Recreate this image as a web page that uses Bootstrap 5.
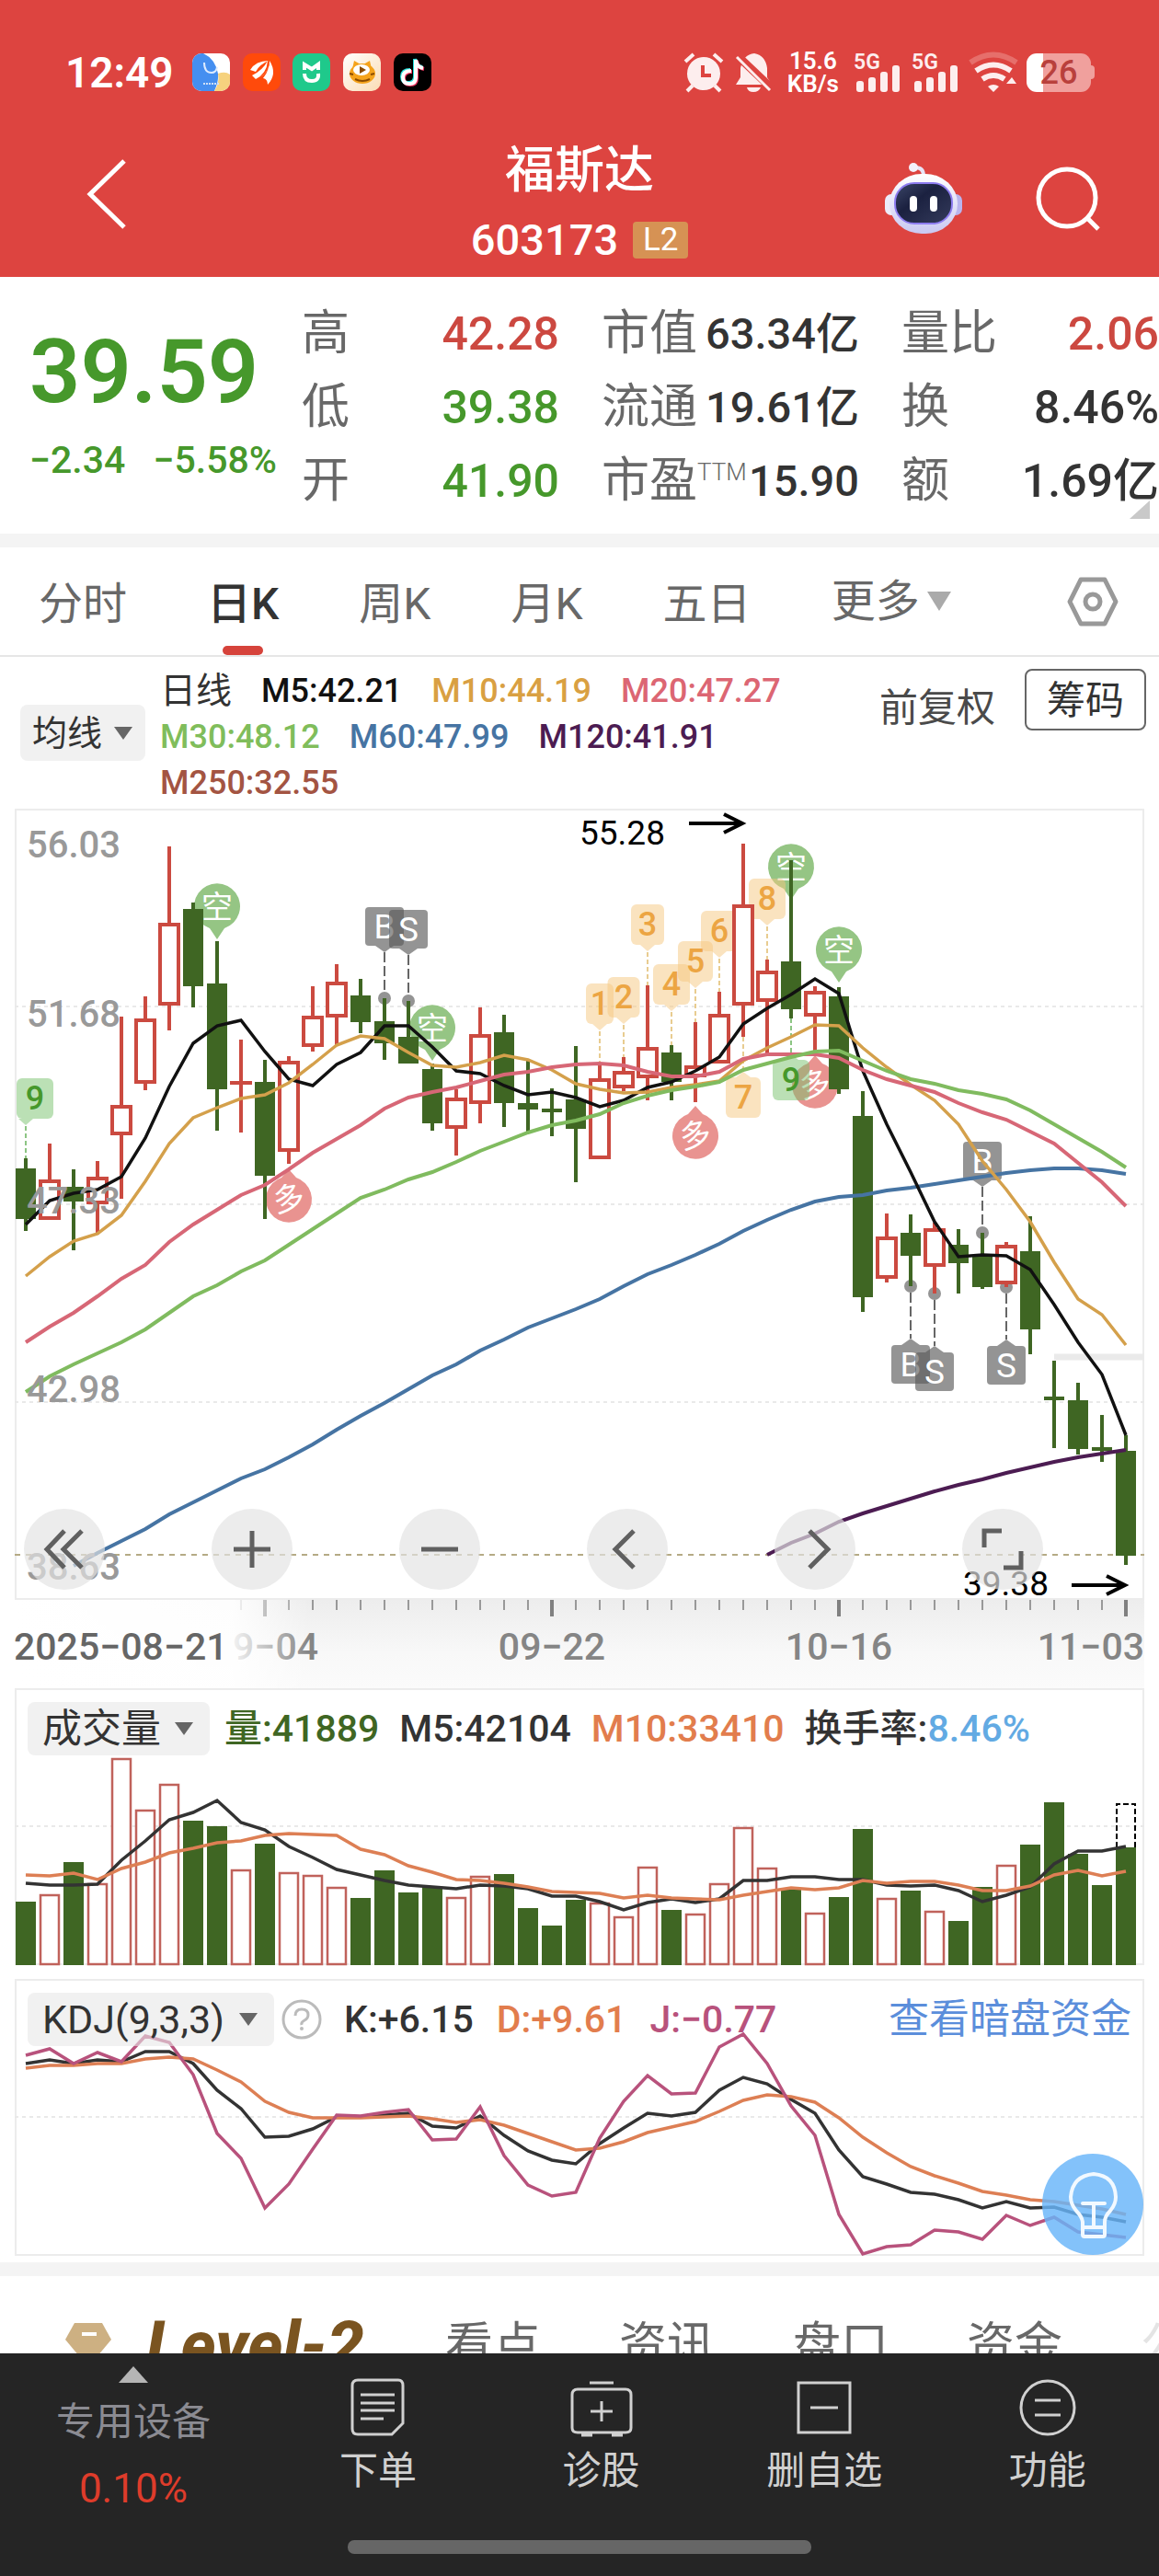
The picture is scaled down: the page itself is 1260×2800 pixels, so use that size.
<!DOCTYPE html>
<html lang="zh-CN">
<head>
<meta charset="utf-8">
<meta name="viewport" content="width=device-width, initial-scale=1">
<title>福斯达 603173</title>
<link rel="stylesheet" href="https://cdn.jsdelivr.net/npm/bootstrap@5.3.0/dist/css/bootstrap.min.css">
<style>
body{font-family:Roboto,"Noto Sans CJK SC",sans-serif;background:#fff;color:#333;font-size:42px;line-height:56px}
svg{display:block;overflow:visible}
a{text-decoration:none}
button{color:inherit;line-height:inherit}
.plain-btn{background:none;border:0;padding:0}
.c-red{color:#cc4840}.c-green{color:#46982b}
.top-zone{background:#dd4440;color:#fff}
.status-row{padding:56px 74px 0 71px;height:102px}
.clock{font-size:46px;line-height:46px;font-weight:600}
.speed{font-size:26px;line-height:25px;font-weight:600}
.speed span{display:block}
.battery{position:relative;width:70px;height:42px;background:linear-gradient(90deg,#fff 18px,#f0a09d 18px);border-radius:11px;color:#b9403c;font-size:36px;line-height:42px;font-weight:500}
.battery::after{content:"";position:absolute;left:70px;top:13px;width:4px;height:15px;border-radius:0 4px 4px 0;background:#f0a09d}
.title-bar{display:grid;grid-template-columns:minmax(0,1fr) auto minmax(0,1fr);padding:52px 64px 12px}
.back-side{padding:0 0 8px 30px}
.stock-name{font-size:54px;line-height:64px;font-weight:500;margin:0 0 15px}
.stock-code{font-size:47px;line-height:56px;font-weight:500}
.level-tag{background:#d69254;border-radius:4px;width:60px;height:40px;font-size:35px;line-height:40px;font-weight:400}
.title-tools{gap:80px;padding-bottom:12px}
.quote-zone{position:relative;height:279px}
.price-col{flex:0 0 328px;padding:63px 0 0 32px}
.price-big{font-size:97px;line-height:80px;font-weight:600;margin-bottom:28px}
.price-chg{font-size:41px;gap:30px;font-weight:500;white-space:nowrap}
.stat-grid{display:grid;grid-template-columns:repeat(3,1fr);column-gap:46px;padding-top:22px}
.stat-grid dl{margin:0}
.stat-line{display:flex;justify-content:space-between;line-height:80px;height:80px;white-space:nowrap}
.stat-line dt{font-weight:400;font-size:52px;color:#686868}
.stat-line dd{font-weight:500;font-size:50px;margin:0}
.mid-col dd{font-size:47px}
.ttm{font-size:26px;line-height:26px;vertical-align:18px;font-weight:300}
.fold-mark{position:absolute;right:10px;bottom:16px}
.band{height:15px;background:#f4f4f4}
.period-tabs{height:119px;padding:0 44px 0 42px;gap:87px;border-bottom:2px solid #e6e6e6;font-size:48px;color:#686868}
.period-tabs .tab-link{color:#686868;height:117px;line-height:124px;display:flex;flex-direction:column;align-items:center}
.period-tabs .tab-link.on{color:#333;font-weight:500}
.tab-link.on::after{content:"";flex:0 0 10px;width:44px;margin-top:-17px;border-radius:5px;background:#d6433b}
.ma-zone{height:165px;padding:12px 14px 3px 22px}
.pick{appearance:none;-webkit-appearance:none;border:0;border-radius:8px;color:#333;background:rgba(232,232,232,.6) url("data:image/svg+xml,%3Csvg xmlns='http://www.w3.org/2000/svg' width='20' height='14'%3E%3Cpath d='M0 0H20L10 14Z' fill='%23666'/%3E%3C/svg%3E") no-repeat right 18px center;height:58px;line-height:58px;padding:0 53px 0 16px;font-size:43px}
.pick-ma{font-size:38px;height:61px;padding:0 46px 0 13px;background-position:right 14px center;margin-top:40px}
.ma-list{flex:0 1 745px;gap:0 32px;font-size:36px;line-height:50px;font-weight:500;margin-left:16px}
.ma-list .kind{font-size:39px;font-weight:400}
.chip-btn{border:2px solid #666;border-radius:8px;width:132px;height:67px;padding:2px 0 0;font-size:42px;line-height:60px;color:#333;margin-top:1px}
.adjust{margin-top:16px;color:#4a4a4a}
.charts{padding:0 16px 6px}
.stack{display:grid}
.stack>*{grid-area:1/1;min-width:0}
.stack svg.plot{width:100%;height:auto}
.plot text{font-family:Roboto,"Noto Sans CJK SC",sans-serif}
.ctrl-row{align-self:end;gap:116px;padding:0 0 11px 10px}
.ctrl{width:88px;height:88px;border:0;border-radius:50%;background:rgba(227,227,227,.68);padding:0}
.ic{fill:none;stroke:#606060;stroke-width:5}
.sub-head{align-self:start;padding:14px 14px 0;height:74px;white-space:nowrap}
.vals{gap:22px;font-size:41px;font-weight:500}
.vals-k{gap:25px}
.gap-kdj{margin-top:14px}
.dark-link{color:#5b8edb;font-size:44px}
.bulb{align-self:end;justify-self:end;width:110px;height:110px;border:0;border-radius:50%;background:rgba(104,181,249,.82);padding:0;margin:0 1px 2px 0}
.info-tabs{height:84px;overflow:hidden;padding:68px 0 0 71px;white-space:nowrap}
.info-tabs a{color:#686868;font-size:52px;line-height:80px;margin-right:85px}
.info-tabs a.lv{color:#7a5420;font-size:72px;font-weight:800;font-style:italic;margin:0 88px 0 38px}
.info-tabs a.faint{color:#e4e4e4;margin:0}
.dock{background:#252525;color:#d0d0d0;height:242px;display:flex;flex-direction:column}
.dock-item{flex:1 1 0;padding-top:26px;color:#d0d0d0}
.dock-item svg{height:66px}
.dock-item span{line-height:72px}
.dock-first{flex:0 0 23%;color:#8b8b92;padding-top:14px}
.dock-first svg{height:18px}
.dock-first span{line-height:86px}
.dock-first .pct{color:#de3c2b;font-size:44px;line-height:58px}
.dk{fill:none;stroke:#d0d0d0;stroke-width:3}
.home-bar{width:504px;height:15px;border-radius:7px;background:#666;margin-bottom:24px}
</style>
</head>
<body>
<header class="top-zone">
  <div class="status-row d-flex align-items-center justify-content-between">
    <div class="d-flex align-items-center">
      <span class="clock me-3">12:49</span>
      <svg width="260" height="42" viewBox="0 0 260 42" class="ms-1">
        <defs><clipPath id="ap"><rect width="41" height="41" rx="10"/></clipPath>
        <linearGradient id="cream" x2="1" y2="1"><stop offset="0" stop-color="#fff"/><stop offset="1" stop-color="#fbdcb4"/></linearGradient></defs>
        <g clip-path="url(#ap)"><path fill="#fff" d="M0 0H41V41H0Z"/><path fill="#458ff0" d="M0 0H12Q25 6 28 22 29 30 24 41H0Z"/><path fill="#f6d27e" d="M28 22Q36 19 41 23V41H24Q30 32 28 22Z"/><path d="M13 10q0 11 8 11 5 0 6-6" fill="none" stroke="#dcebff" stroke-width="2"/><path d="M12 33H29" stroke="#cfe0f7" stroke-width="2" stroke-dasharray="2 1"/></g>
        <g transform="translate(55)"><rect width="41" height="41" rx="10" fill="#ff4a0b"/><path fill="#fff" d="M8 18Q14 8 28 8 18 12 14 20ZM10 24Q22 18 27 8 26 22 14 28ZM19 26Q30 18 29 8 38 22 27 34Q27 28 22 27 26 22 28 16 25 22 19 26Z"/></g>
        <g transform="translate(109)"><rect width="41" height="41" rx="10" fill="#1fc98b"/><path d="M13 18V12l8 5 7-5v6M13 22q0 8 8 8t7-8" fill="none" stroke="#fff" stroke-width="4"/></g>
        <g transform="translate(164)"><rect width="41" height="41" rx="10" fill="url(#cream)"/><ellipse cx="21" cy="22" rx="14" ry="11" fill="#f5a31c"/><path d="M10 17l2-9 7 4ZM31 17l-2-9-7 4Z" fill="#f5a31c"/><ellipse cx="20" cy="18" rx="9" ry="6" fill="#fff"/><path d="M18 14l7 4-7 4Z" fill="#8a4b00"/><path d="M13 28q8 4 16 0M7 22l4 1M34 22l-4 1" stroke="#8a4b00" stroke-width="2" fill="none"/></g>
        <g transform="translate(219)"><rect width="41" height="41" rx="10"/><g fill="none" stroke-width="4"><path d="M19 19q-9 0-9 7t7 7 7-7V7q1 8 8 9" stroke="#25e0dc" transform="translate(-1 -1)"/><path d="M19 19q-9 0-9 7t7 7 7-7V7q1 8 8 9" stroke="#f03561" transform="translate(1 1)"/><path d="M19 19q-9 0-9 7t7 7 7-7V7q1 8 8 9" stroke="#fff"/></g></g>
      </svg>
    </div>
    <div class="d-flex align-items-center">
      <svg width="96" height="42" viewBox="0 0 96 42" fill="#fdeeee">
        <circle cx="21" cy="22" r="18"/><g fill="none" stroke="#fdeeee" stroke-width="4"><path d="M1 9l9-8M41 9l-9-8M9 35l-6 6M33 35l6 6"/></g><path d="M20 13v11h9" fill="none" stroke="#dd4440" stroke-width="4"/>
        <path d="M56 34l5-8V16Q64 1 76 0 88 2 90 16v10l5 8Z"/><path d="M68 37h15q-2 5-8 5t-7-5Z"/><path d="M57 2l38 36" stroke="#dd4440" stroke-width="9"/><path d="M57 4l36 36" stroke="#fdeeee" stroke-width="3"/>
      </svg>
      <div class="speed text-center ms-3 me-3"><span>15.6</span><span>KB/s</span></div>
      <svg width="180" height="42" viewBox="0 0 180 42" fill="#fdeeee" font-family="Roboto, sans-serif" font-size="23" font-weight="600">
        <g><text x="0" y="17">5G</text><rect x="3" y="30" width="8" height="12" rx="3"/><rect x="16" y="26" width="8" height="16" rx="3"/><rect x="29" y="20" width="8" height="22" rx="3"/><rect x="42" y="13" width="8" height="29" rx="3"/></g>
        <g transform="translate(63)"><text x="0" y="17">5G</text><rect x="3" y="30" width="8" height="12" rx="3"/><rect x="16" y="26" width="8" height="16" rx="3"/><rect x="29" y="20" width="8" height="22" rx="3"/><rect x="42" y="13" width="8" height="29" rx="3"/></g>
        <g fill="none" stroke="#fdeeee" stroke-width="6"><path d="M127 10q25-17 50 0" stroke="#e66f6b"/><path d="M133 19q19-13 38 0"/><path d="M140 28q12-8 24 0"/></g><path d="M146 36q6-4 12 0l-6 6ZM166 33l6-7 5 7Z"/>
      </svg>
      <span class="battery text-center ms-2">26</span>
    </div>
  </div>
  <nav class="title-bar align-items-center">
    <div class="back-side"><button class="plain-btn" aria-label="返回"><svg width="44" height="76" viewBox="0 0 44 76"><path d="M41 2L4 38 41 74" fill="none" stroke="#fff" stroke-width="5"/></svg></button></div>
    <div class="text-center">
      <h1 class="stock-name">福斯达</h1>
      <div class="stock-code d-flex align-items-center justify-content-center gap-3">603173<span class="level-tag">L2</span></div>
    </div>
    <div class="title-tools d-flex justify-content-end align-items-center">
      <button class="plain-btn" aria-label="智能助手"><svg width="84" height="78" viewBox="0 0 84 78"><defs><linearGradient id="rb" y2="1" x2="0"><stop offset="0" stop-color="#fff"/><stop offset="1" stop-color="#c9c8f2"/></linearGradient><linearGradient id="vs" x2="1" y2="1"><stop offset="0" stop-color="#3c4769"/><stop offset=".4" stop-color="#1b2140"/><stop offset="1" stop-color="#343b5c"/></linearGradient></defs><path d="M42 14q0-9-9-9" fill="none" stroke="#e8e4f6" stroke-width="4"/><circle cx="31" cy="5" r="5" fill="#f3f0fb"/><rect y="34" width="14" height="23" rx="7" fill="#ececfa"/><rect x="70" y="34" width="14" height="23" rx="7" fill="#b9b5ee"/><rect x="5" y="12" width="74" height="65" rx="35" fill="url(#rb)"/><rect x="11" y="22" width="62" height="44" rx="21" fill="url(#vs)" stroke="#8d7cf0" stroke-width="2"/><path d="M31 40v9M53 40v9" stroke="#fff" stroke-width="8" stroke-linecap="round"/></svg></button>
      <button class="plain-btn" aria-label="搜索"><svg width="70" height="70" viewBox="0 0 70 70" fill="none" stroke="#fff" stroke-width="5"><circle cx="34" cy="34" r="31"/><path d="M56 56l12 12"/></svg></button>
    </div>
  </nav>
</header>

<main>
<section class="quote-zone d-flex">
  <div class="price-col c-green">
    <div class="price-big">39.59</div>
    <div class="price-chg d-flex"><span>−2.34</span><span>−5.58%</span></div>
  </div>
  <div class="stat-grid flex-fill">
    <dl><div class="stat-line"><dt>高</dt><dd class="c-red">42.28</dd></div><div class="stat-line"><dt>低</dt><dd class="c-green">39.38</dd></div><div class="stat-line"><dt>开</dt><dd class="c-green">41.90</dd></div></dl>
    <dl class="mid-col"><div class="stat-line"><dt>市值</dt><dd>63.34亿</dd></div><div class="stat-line"><dt>流通</dt><dd>19.61亿</dd></div><div class="stat-line"><dt>市盈<span class="ttm">TTM</span></dt><dd>15.90</dd></div></dl>
    <dl><div class="stat-line"><dt>量比</dt><dd class="c-red">2.06</dd></div><div class="stat-line"><dt>换</dt><dd>8.46%</dd></div><div class="stat-line"><dt>额</dt><dd>1.69亿</dd></div></dl>
  </div>
  <svg class="fold-mark" width="22" height="20" viewBox="0 0 22 20"><path d="M22 0V20H0Z" fill="#c9c9c9"/></svg>
</section>
<div class="band"></div>

<nav class="period-tabs d-flex align-items-center">
  <a class="tab-link" href="#">分时</a><a class="tab-link on" href="#">日K</a><a class="tab-link" href="#">周K</a><a class="tab-link" href="#">月K</a><a class="tab-link" href="#">五日</a>
  <button class="plain-btn d-flex align-items-center gap-2">更多<svg width="26" height="21" viewBox="0 0 26 21"><path d="M0 0H26L13 21Z" fill="#aaa"/></svg></button>
  <button class="plain-btn ms-auto" aria-label="设置"><svg width="56" height="56" viewBox="0 0 56 56" fill="none" stroke="#999" stroke-width="5" stroke-linejoin="round"><path d="M15 4H41L53 28 41 52H15L3 28Z"/><circle cx="28" cy="28" r="8"/></svg></button>
</nav>

<section class="ma-zone d-flex align-items-start">
  <select class="pick pick-ma" aria-label="主图指标"><option>均线</option></select>
  <div class="ma-list d-flex flex-wrap">
    <span class="kind">日线</span><span style="color:#111">M5:42.21</span><span style="color:#d9a042">M10:44.19</span><span style="color:#dc6673">M20:47.27</span><span style="color:#80bd5b">M30:48.12</span><span style="color:#4674a3">M60:47.99</span><span style="color:#4c1c52">M120:41.91</span><span style="color:#a35442">M250:32.55</span>
  </div>
  <span class="adjust ms-auto me-4">前复权</span>
  <button class="btn chip-btn ms-2">筹码</button>
</section>

<section class="charts">
  <div class="stack">
    <svg class="plot" id="kline" viewBox="16 879 1228 860" role="img" aria-label="日K线"></svg>
    <div class="ctrl-row d-flex">
      <button class="ctrl" aria-label="最早"><svg width="88" height="88" class="ic"><path d="M44 24L25 44l19 20M63 24L43 44l20 20"/></svg></button>
      <button class="ctrl" aria-label="放大"><svg width="88" height="88" class="ic"><path d="M24 44H64M44 24V64"/></svg></button>
      <button class="ctrl" aria-label="缩小"><svg width="88" height="88" class="ic"><path d="M24 44H64"/></svg></button>
      <button class="ctrl" aria-label="左移"><svg width="88" height="88" class="ic"><path d="M51 24L31 44l20 20"/></svg></button>
      <button class="ctrl" aria-label="右移"><svg width="88" height="88" class="ic"><path d="M38 24L58 44 38 64"/></svg></button>
      <button class="ctrl" aria-label="全屏"><svg width="88" height="88" class="ic"><path d="M24 42V24H43M64 46V64H45"/></svg></button>
    </div>
  </div>
  <div class="stack"><svg class="plot" id="axis" viewBox="16 1739 1228 96" role="img" aria-label="日期"></svg></div>
  <div class="stack">
    <svg class="plot" id="vol" viewBox="16 1835 1228 302" role="img" aria-label="成交量"></svg>
    <div class="sub-head d-flex align-items-center">
      <select class="pick" aria-label="副图一指标"><option>成交量</option></select>
      <div class="vals d-flex ms-3"><span style="color:#3f6623">量:41889</span><span>M5:42104</span><span style="color:#e27d4d">M10:33410</span><span>换手率:<span style="color:#62aae3">8.46%</span></span></div>
    </div>
  </div>
  <div class="stack gap-kdj">
    <svg class="plot" id="kdj" viewBox="16 2151 1228 302" role="img" aria-label="KDJ"></svg>
    <div class="sub-head d-flex align-items-center">
      <select class="pick" aria-label="副图二指标"><option>KDJ(9,3,3)</option></select>
      <button class="plain-btn ms-2" aria-label="帮助"><svg width="44" height="44" viewBox="0 0 44 44"><circle cx="22" cy="22" r="20" fill="none" stroke="#bbb" stroke-width="3"/><path d="M15 18q0-7 7-7t7 6q0 4-4 6t-3 5" fill="none" stroke="#bbb" stroke-width="3"/><circle cx="22" cy="32" r="2" fill="#bbb"/></svg></button>
      <div class="vals vals-k d-flex ms-4"><span>K:+6.15</span><span style="color:#e27d4d">D:+9.61</span><span style="color:#b8527c">J:−0.77</span></div>
      <a class="dark-link ms-auto" href="#">查看暗盘资金</a>
    </div>
    <button class="bulb" aria-label="提示"><svg width="110" height="110" viewBox="0 0 110 110" fill="none" stroke="#f2f9ff" stroke-width="4" stroke-linejoin="round" stroke-linecap="round"><path d="M44 88V74Q43 68 37 62 31 55 31 47 33 24 56 22 79 24 80 47 80 55 74 62 68 68 68 74V88Q68 90 66 90H46Q44 90 44 88ZM45 80H67M44 54H68M56 54V79"/></svg></button>
  </div>
</section>
<div class="band"></div>

<nav class="info-tabs d-flex align-items-center">
  <svg width="50" height="50" viewBox="0 0 50 50" class="flex-shrink-0"><path d="M10 0H40L50 18 25 48 0 18Z" fill="#cdb082"/><path d="M18 12H34" stroke="#fff" stroke-width="4"/></svg>
  <a class="lv" href="#">Level-2</a><a href="#">看点</a><a href="#">资讯</a><a href="#">盘口</a><a href="#">资金</a><a class="faint" href="#">公告</a>
</nav>
</main>

<footer class="dock">
  <div class="d-flex flex-fill">
    <button class="plain-btn dock-first d-flex flex-column align-items-center"><svg width="32" height="18" viewBox="0 0 32 18"><path d="M16 0L32 18H0Z" fill="#b5b5b5"/></svg><span>专用设备</span><span class="pct">0.10%</span></button>
    <a class="dock-item d-flex flex-column align-items-center" href="#"><svg width="60" height="66" class="dk"><path d="M8 3H52Q57 3 57 9V50L45 62H8Q2 62 2 56V9Q2 3 8 3ZM11 19H48M11 28H48M11 36H48M11 45H36"/></svg><span>下单</span></a>
    <a class="dock-item d-flex flex-column align-items-center" href="#"><svg width="70" height="66" class="dk"><path d="M9 13H61Q67 13 67 19V55Q67 60 61 60H9Q3 60 3 55V19Q3 13 9 13ZM22 6H48M35 26V48M23 37H47M13 63H25M46 63H58"/></svg><span>诊股</span></a>
    <a class="dock-item d-flex flex-column align-items-center" href="#"><svg width="60" height="66" class="dk"><path d="M2 6H58V60H2ZM15 33H45"/></svg><span>删自选</span></a>
    <a class="dock-item d-flex flex-column align-items-center" href="#"><svg width="62" height="66" class="dk"><circle cx="31" cy="33" r="29"/><path d="M17 25H45M17 41H45"/></svg><span>功能</span></a>
  </div>
  <div class="home-bar mx-auto"></div>
</footer>

<script>
const X = i => 28 + 26 * i, RED = '#cb4a40', GREEN = '#3f6623';
const poly = (a, c, w, s = 0) => `<polyline fill="none" stroke="${c}" stroke-width="${w}" points="${a.map((y, k) => X(k + s) + ',' + y).join(' ')}"/>`;
const grid = y => `<path d="M16 ${y}H1244" stroke="#e9e9e9" stroke-width="2" stroke-dasharray="4 4"/>`;
const txt = (x, y, s, size, fill, o = '') => `<text x="${x}" y="${y}" font-size="${size}" fill="${fill}" ${o}>${s}</text>`;

/* daily candles: colour, high, body top, body bottom, low */
const candles = [
['g',1259,1270,1325,1338],['r',1243,1282,1326,1326],['g',1271,1290,1306,1359],['r',1262,1279,1309,1342],['r',1105,1201,1234,1303],
['r',1083,1107,1178,1185],['r',920,1003,1093,1120],['g',981,988,1072,1095],['g',1023,1069,1184,1229],['r',1130,1175,1179,1231],
['g',1152,1176,1278,1325],['r',1148,1153,1252,1265],['r',1072,1104,1138,1143],['r',1048,1067,1106,1136],['g',1064,1082,1111,1123],
['g',1085,1110,1134,1152],['g',1088,1127,1156,1156],['g',1156,1162,1221,1229],['r',1184,1193,1227,1256],['r',1095,1124,1200,1221],
['g',1103,1122,1199,1225],['g',1153,1199,1206,1230],['g',1183,1205,1209,1235],['g',1137,1195,1227,1285],['r',1157,1172,1260,1260],
['r',1149,1164,1183,1186],['r',1071,1138,1172,1196],['g',1136,1144,1176,1196],['r',1111,1158,1171,1198],['r',1078,1102,1156,1156],
['r',917,983,1093,1127],['r',1043,1055,1089,1146],['g',935,1045,1097,1107],['r',1072,1077,1105,1146],['g',1073,1083,1184,1189],
['g',1186,1213,1410,1426],['r',1319,1344,1390,1394],['g',1320,1340,1365,1398],['r',1329,1335,1377,1406],['g',1336,1353,1373,1406],
['g',1340,1365,1399,1401],['r',1350,1353,1396,1399],['g',1322,1360,1445,1472],['g',1479,1518,1522,1574],['g',1503,1522,1575,1581],
['g',1538,1573,1577,1589],['g',1560,1577,1691,1701]];
const m5=[1331,1305,1297,1293,1279,1237,1181,1134,1115,1109,1143,1173,1180,1157,1144,1115,1115,1138,1164,1167,1180,1190,1187,1193,1203,1196,1182,1176,1164,1149,1113,1096,1081,1064,1080,1164,1222,1274,1328,1366,1364,1365,1380,1418,1459,1494,1560];
const m10=[1387,1366,1349,1341,1321,1284,1243,1215,1204,1194,1190,1177,1157,1136,1126,1129,1144,1158,1160,1155,1147,1152,1163,1178,1184,1188,1187,1182,1179,1175,1153,1139,1127,1114,1115,1139,1160,1179,1196,1222,1262,1293,1328,1372,1412,1429,1462];
const m20=[1459,1442,1427,1409,1390,1375,1350,1331,1315,1299,1288,1271,1253,1238,1223,1205,1193,1187,1182,1175,1168,1165,1160,1157,1156,1158,1165,1170,1170,1165,1151,1146,1146,1146,1150,1163,1173,1180,1187,1199,1209,1217,1230,1243,1264,1285,1311];
const m30=[1513,1496,1483,1471,1459,1445,1427,1409,1397,1382,1370,1353,1336,1319,1302,1293,1282,1274,1263,1251,1241,1231,1223,1218,1211,1199,1191,1185,1181,1176,1163,1156,1149,1143,1142,1153,1164,1173,1178,1185,1189,1195,1207,1222,1237,1252,1269];
const m60=[1702,1688,1675,1662,1646,1633,1620,1607,1597,1584,1570,1554,1539,1525,1510,1495,1483,1468,1456,1443,1433,1423,1412,1398,1385,1375,1364,1352,1338,1326,1315,1306,1301,1299,1294,1291,1287,1283,1279,1275,1272,1270,1270,1272,1276];
const m120=[1690,1677,1667,1654,1645,1637,1629,1621,1614,1608,1601,1595,1589,1584,1580,1576];

let k = '<rect x="17" y="880" width="1226" height="858" fill="#fff" stroke="#ececec" stroke-width="2"/>' + grid(1094) + grid(1309) + grid(1524);
k += '<path d="M16 1690H1244" stroke="#b5aa85" stroke-width="2" stroke-dasharray="6 6"/><path d="M1146 1475H1244" stroke="#eaeaea" stroke-width="7"/>';
/* round bearish / bullish pins */
for (const [i, t] of [[8,1021],[17,1153],[32,978],[34,1068]])
  k += `<path d="M${X(i)} ${t}l-8 -12a25 25 0 1 1 16 0Z" fill="#95c584"/>` + txt(X(i), t - 23, '空', 34, '#fff', 'text-anchor="middle"');
for (const [i, t] of [[11,1271],[28,1202],[33,1147]])
  k += `<path d="M${X(i)} ${t}l-8 9a25 25 0 1 0 16 0Z" fill="#e99390"/>` + txt(X(i), t + 44, '多', 34, '#fff', `text-anchor="middle" transform="rotate(-12 ${X(i)} ${t + 32})"`);
/* numbered sequence tags: index, digit, rect top, width, line end, green?, below?, shift */
for (const [i, s, y, w, e, g, b, dx = 0] of [[24,1,1069,30,1157],[25,2,1062,35,1149],[26,3,983,36,1071],[27,4,1048,40,1136],[28,5,1023,38,1111],[29,6,990,40,1078],[31,8,955,40,1043],[30,7,1171,38,1127,0,1],[32,9,1152,40,1107,1,1],[0,9,1172,40,1259,1,0,10]]) {
  const x = X(i), f = g ? 'rgba(119,193,107,.5)' : 'rgba(245,199,127,.5)', c = g ? '#46982b' : '#eca543';
  k += `<rect x="${x - w / 2 + dx}" y="${y}" width="${w}" height="44" rx="6" fill="${f}"/>`;
  k += b ? `<path d="M${x - 8} ${y}l8 -6 8 6Z" fill="${f}"/><path d="M${x} ${e}V${y - 8}"` : `<path d="M${x - 8} ${y + 44}l8 7 8 -7Z" fill="${f}"/><path d="M${x} ${y + 52}V${e}"`;
  k += ` stroke="${g ? '#8cc583' : '#e8cc90'}" stroke-width="2" stroke-dasharray="5 3"/>` + txt(x + dx, y + 34, s, 36, c, 'text-anchor="middle" font-weight="500"');
}
/* buy / sell marks: index, letter, tag top, dot y */
for (const [i, s, y, d] of [[15,'B',986,1085],[16,'S',989,1088],[40,'B',1241,1340],[37,'B',1462,1398],[38,'S',1470,1406],[41,'S',1463,1399]]) {
  const x = X(i), up = y < d, f = 'rgba(90,90,90,.65)';
  k += `<rect x="${x - 21}" y="${y}" width="42" height="42" rx="4" fill="${f}"/><path d="${up ? `M${x - 10} ${y + 42}l10 7 10 -7Z` : `M${x - 10} ${y}l10 -7 10 7Z`}" fill="${f}"/><circle cx="${x}" cy="${d}" r="7" fill="#949494"/><path d="M${x} ${up ? y + 49 : d + 7}V${up ? d - 7 : y - 7}" stroke="#666" stroke-width="2" stroke-dasharray="11 4"/>` + txt(x, y + 34, s, 37, '#fff', 'text-anchor="middle"');
}
candles.forEach(([c, h, t, b, l], i) => {
  const x = X(i);
  k += `<path d="M${x} ${h}V${l}" stroke="${c === 'r' ? RED : GREEN}" stroke-width="4"/>`;
  if (c === 'g') k += `<rect x="${x - 11}" y="${t}" width="22" height="${b - t}" fill="${GREEN}"/>`;
  else if (b - t < 6) k += `<rect x="${x - 12}" y="${t}" width="24" height="${b - t}" fill="${RED}"/>`;
  else k += `<rect x="${x - 10}" y="${t + 2}" width="20" height="${b - t - 4}" fill="#fff" stroke="${RED}" stroke-width="4"/>`;
});
k += poly(m60, '#4674a3', 4, 2) + poly(m120, '#4c1c52', 4, 31) + poly(m5, '#111', 3.5) + poly(m10, '#d4a04b', 3.5) + poly(m20, '#d76776', 4) + poly(m30, '#80bb5f', 4);
[['56.03',932],['51.68',1116],['47.33',1319],['42.98',1524],['38.63',1717]].forEach(([s, y]) => k += txt(29, y, s, 40, '#999', 'font-weight="500"'));
k += txt(630, 918, '55.28', 37, '#000') + txt(1047, 1734, '39.38', 37, '#000');
k += '<path d="M749 895H806M787 885L807 895 787 905M1165 1723H1222M1203 1713L1223 1723 1203 1733" fill="none" stroke="#000" stroke-width="4"/>';
document.getElementById('kline').innerHTML = k;

/* date axis */
let a = '<defs><linearGradient id="sh" x2="0" y2="1"><stop offset="0" stop-color="#ededed"/><stop offset=".6" stop-color="#f8f8f8"/><stop offset="1" stop-color="#fbfbfb"/></linearGradient><linearGradient id="fd"><stop offset="0" stop-color="#fff"/><stop offset=".74" stop-color="#fff" stop-opacity=".9"/><stop offset="1" stop-color="#fff" stop-opacity="0"/></linearGradient></defs><rect x="16" y="1739" width="1228" height="96" fill="url(#sh)"/>';
for (let i = 9; i < 47; i++) a += (i - 10) % 12 ? `<path d="M${X(i)} 1739V1750" stroke="#999" stroke-width="2"/>` : `<path d="M${X(i)} 1739V1757" stroke="#808080" stroke-width="4"/>`;
a += txt(346, 1804, '9−04', 41, '#858585', 'font-weight="500" text-anchor="end"') + '<rect x="16" y="1739" width="320" height="96" fill="url(#fd)"/>';
a += txt(15, 1804, '2025−08−21', 41, '#666', 'font-weight="500"') + txt(600, 1804, '09−22', 41, '#858585', 'font-weight="500" text-anchor="middle"') + txt(912, 1804, '10−16', 41, '#858585', 'font-weight="500" text-anchor="middle"') + txt(1244, 1804, '11−03', 41, '#858585', 'font-weight="500" text-anchor="end"');
document.getElementById('axis').innerHTML = a;

/* volume */
const vt=[2067,2059,2024,2047,1911,1967,1939,1979,1985,2032,2004,2035,2038,2051,2063,2033,2057,2051,2062,2039,2037,2074,2093,2065,2068,2083,2029,2076,2080,2047,1986,2030,2053,2079,2062,1988,2063,2055,2077,2088,2051,2027,2005,1959,2015,2049,2008];
const v5=[2047,2049,2049,2048,2022,2001,1978,1970,1957,1981,1989,2007,2019,2032,2038,2044,2049,2051,2053,2049,2050,2053,2061,2061,2067,2076,2068,2064,2068,2064,2044,2044,2040,2040,2043,2043,2049,2050,2049,2055,2067,2060,2051,2026,2012,2012,2007];
const v10=[2038,2039,2036,2043,2031,2024,2014,2009,2003,2001,1995,1993,1994,1995,2010,2016,2028,2035,2043,2044,2047,2051,2056,2057,2058,2063,2060,2063,2064,2065,2060,2056,2052,2054,2052,2044,2047,2045,2045,2049,2055,2055,2050,2038,2033,2039,2034];
let v = '<rect x="17" y="1836" width="1226" height="299" fill="#fff" stroke="#ececec" stroke-width="2"/>' + grid(1985);
vt.forEach((t, i) => v += candles[i][0] === 'g' ? `<rect x="${X(i) - 11}" y="${t}" width="22" height="${2136 - t}" fill="${GREEN}"/>` : `<rect x="${X(i) - 10}" y="${t + 1}" width="20" height="${2134 - t}" fill="#fff" stroke="#c0625b" stroke-width="2.5"/>`);
v += '<path d="M1214 2008V1961H1234V2008" fill="none" stroke="#000" stroke-width="2" stroke-dasharray="6 3"/>' + poly(v5, '#333', 3.5) + poly(v10, '#dd7f54', 3.5);
document.getElementById('vol').innerHTML = v;

/* KDJ */
const kk=[2243,2239,2243,2239,2241,2230,2230,2243,2272,2292,2323,2322,2314,2301,2301,2299,2297,2311,2313,2300,2321,2338,2348,2352,2330,2313,2297,2300,2296,2272,2258,2265,2282,2297,2337,2366,2374,2383,2385,2391,2400,2393,2400,2399,2407,2410,2415];
const dd=[2248,2245,2245,2243,2243,2238,2236,2238,2250,2263,2284,2296,2302,2302,2302,2301,2300,2303,2307,2304,2310,2319,2328,2337,2335,2328,2318,2312,2306,2295,2283,2277,2279,2285,2302,2323,2340,2355,2365,2373,2382,2386,2391,2393,2397,2401,2407];
const jj=[2234,2227,2243,2231,2241,2213,2220,2255,2319,2346,2400,2374,2336,2299,2300,2296,2293,2326,2325,2290,2343,2375,2387,2383,2324,2284,2256,2276,2275,2225,2211,2243,2289,2321,2407,2450,2442,2440,2424,2426,2434,2408,2419,2410,2426,2429,2432];
document.getElementById('kdj').innerHTML = '<rect x="17" y="2152" width="1226" height="299" fill="#fff" stroke="#ececec" stroke-width="2"/>' + grid(2301) + poly(kk, '#333', 3.5) + poly(dd, '#dd7f54', 3.5) + poly(jj, '#b8527c', 3.5);
</script>
<script src="https://cdn.jsdelivr.net/npm/bootstrap@5.3.0/dist/js/bootstrap.bundle.min.js"></script>
</body>
</html>
